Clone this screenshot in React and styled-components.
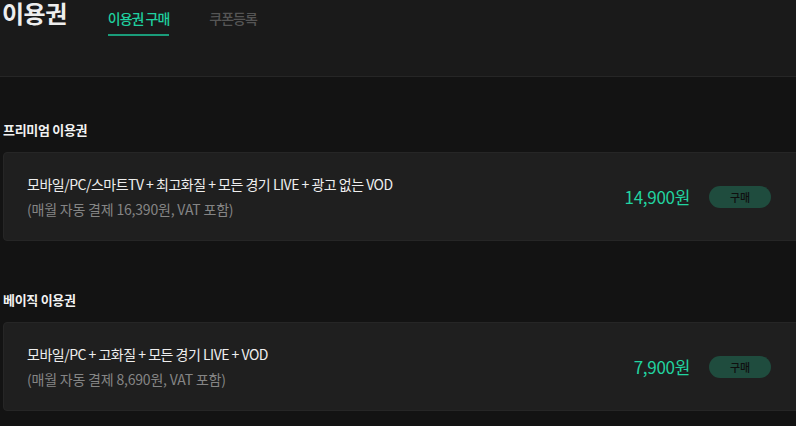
import React from 'react';
import styled, { createGlobalStyle } from 'styled-components';

const GlobalStyle = createGlobalStyle`
  html, body {
    margin: 0;
    padding: 0;
    background: #131313;
  }
  body {
    font-family: "Noto Sans CJK KR", "Noto Sans", sans-serif;
    color: #eee;
    overflow: hidden;
  }
`;

const Page = styled.div`
  width: 796px;
  height: 426px;
  background: #131313;
  overflow: hidden;
`;

const Header = styled.header`
  height: 77px;
  background: #1a1a1a;
  border-bottom: 1px solid #262626;
  display: flex;
  align-items: flex-start;
  padding-left: 2px;
  box-sizing: border-box;
`;

const Title = styled.h1`
  margin: 0;
  font-size: 24px;
  font-weight: 700;
  color: #eee;
  line-height: 26px;
  letter-spacing: -0.5px;
`;

const Tabs = styled.nav`
  display: flex;
  gap: 40px;
  margin-left: 41px;
  margin-top: 7px;
`;

const Tab = styled.a`
  font-size: 14px;
  font-weight: 500;
  line-height: 22px;
  padding-bottom: 5px;
  letter-spacing: -1px;
  color: ${p => (p.$active ? '#1fd09f' : '#555')};
  border-bottom: 2px solid ${p => (p.$active ? '#1a9c7a' : 'transparent')};
`;

const Content = styled.main`
  padding: 43px 0 0 3px;
`;

const Section = styled.section`
  margin-bottom: 49px;
`;

const SectionTitle = styled.h2`
  margin: 0 0 12px;
  font-size: 13px;
  font-weight: 700;
  color: #f2f2f2;
  line-height: 20px;
  letter-spacing: -0.3px;
`;

const Card = styled.div`
  height: 89px;
  box-sizing: border-box;
  margin-right: -10px;
  background: #1f1f1f;
  border: 1px solid #262626;
  border-radius: 4px;
  display: flex;
  align-items: center;
  padding: 0 0 0 23px;
`;

const Info = styled.div`
  flex: 1;
  display: flex;
  flex-direction: column;
  gap: 5px;
`;

const Name = styled.div`
  font-size: 14px;
  line-height: 20px;
  color: #eee;
  letter-spacing: -0.5px;
`;

const Note = styled.div`
  font-size: 14px;
  line-height: 20px;
  color: #858585;
  letter-spacing: -0.2px;
`;

const Price = styled.div`
  font-size: 17px;
  color: #22d3a0;
  letter-spacing: -0.3px;
  margin-right: 19px;
`;

const BuyButton = styled.button`
  width: 62px;
  height: 22px;
  border: none;
  border-radius: 11px;
  background: #1f4c3e;
  color: #0f0f0f;
  font-family: inherit;
  font-size: 11px;
  font-weight: 500;
  padding: 0;
  margin-right: 34px;
  cursor: pointer;
`;

const plans = [
  {
    title: '프리미엄 이용권',
    name: '모바일/PC/스마트TV + 최고화질 + 모든 경기 LIVE + 광고 없는 VOD',
    note: '(매월 자동 결제 16,390원, VAT 포함)',
    price: '14,900원',
  },
  {
    title: '베이직 이용권',
    name: '모바일/PC + 고화질 + 모든 경기 LIVE + VOD',
    note: '(매월 자동 결제 8,690원, VAT 포함)',
    price: '7,900원',
  },
];

export default function App() {
  return (
    <Page>
      <GlobalStyle />
      <Header>
        <Title>이용권</Title>
        <Tabs>
          <Tab $active>이용권 구매</Tab>
          <Tab>쿠폰등록</Tab>
        </Tabs>
      </Header>
      <Content>
        {plans.map(plan => (
          <Section key={plan.title}>
            <SectionTitle>{plan.title}</SectionTitle>
            <Card>
              <Info>
                <Name>{plan.name}</Name>
                <Note>{plan.note}</Note>
              </Info>
              <Price>{plan.price}</Price>
              <BuyButton>구매</BuyButton>
            </Card>
          </Section>
        ))}
      </Content>
    </Page>
  );
}
